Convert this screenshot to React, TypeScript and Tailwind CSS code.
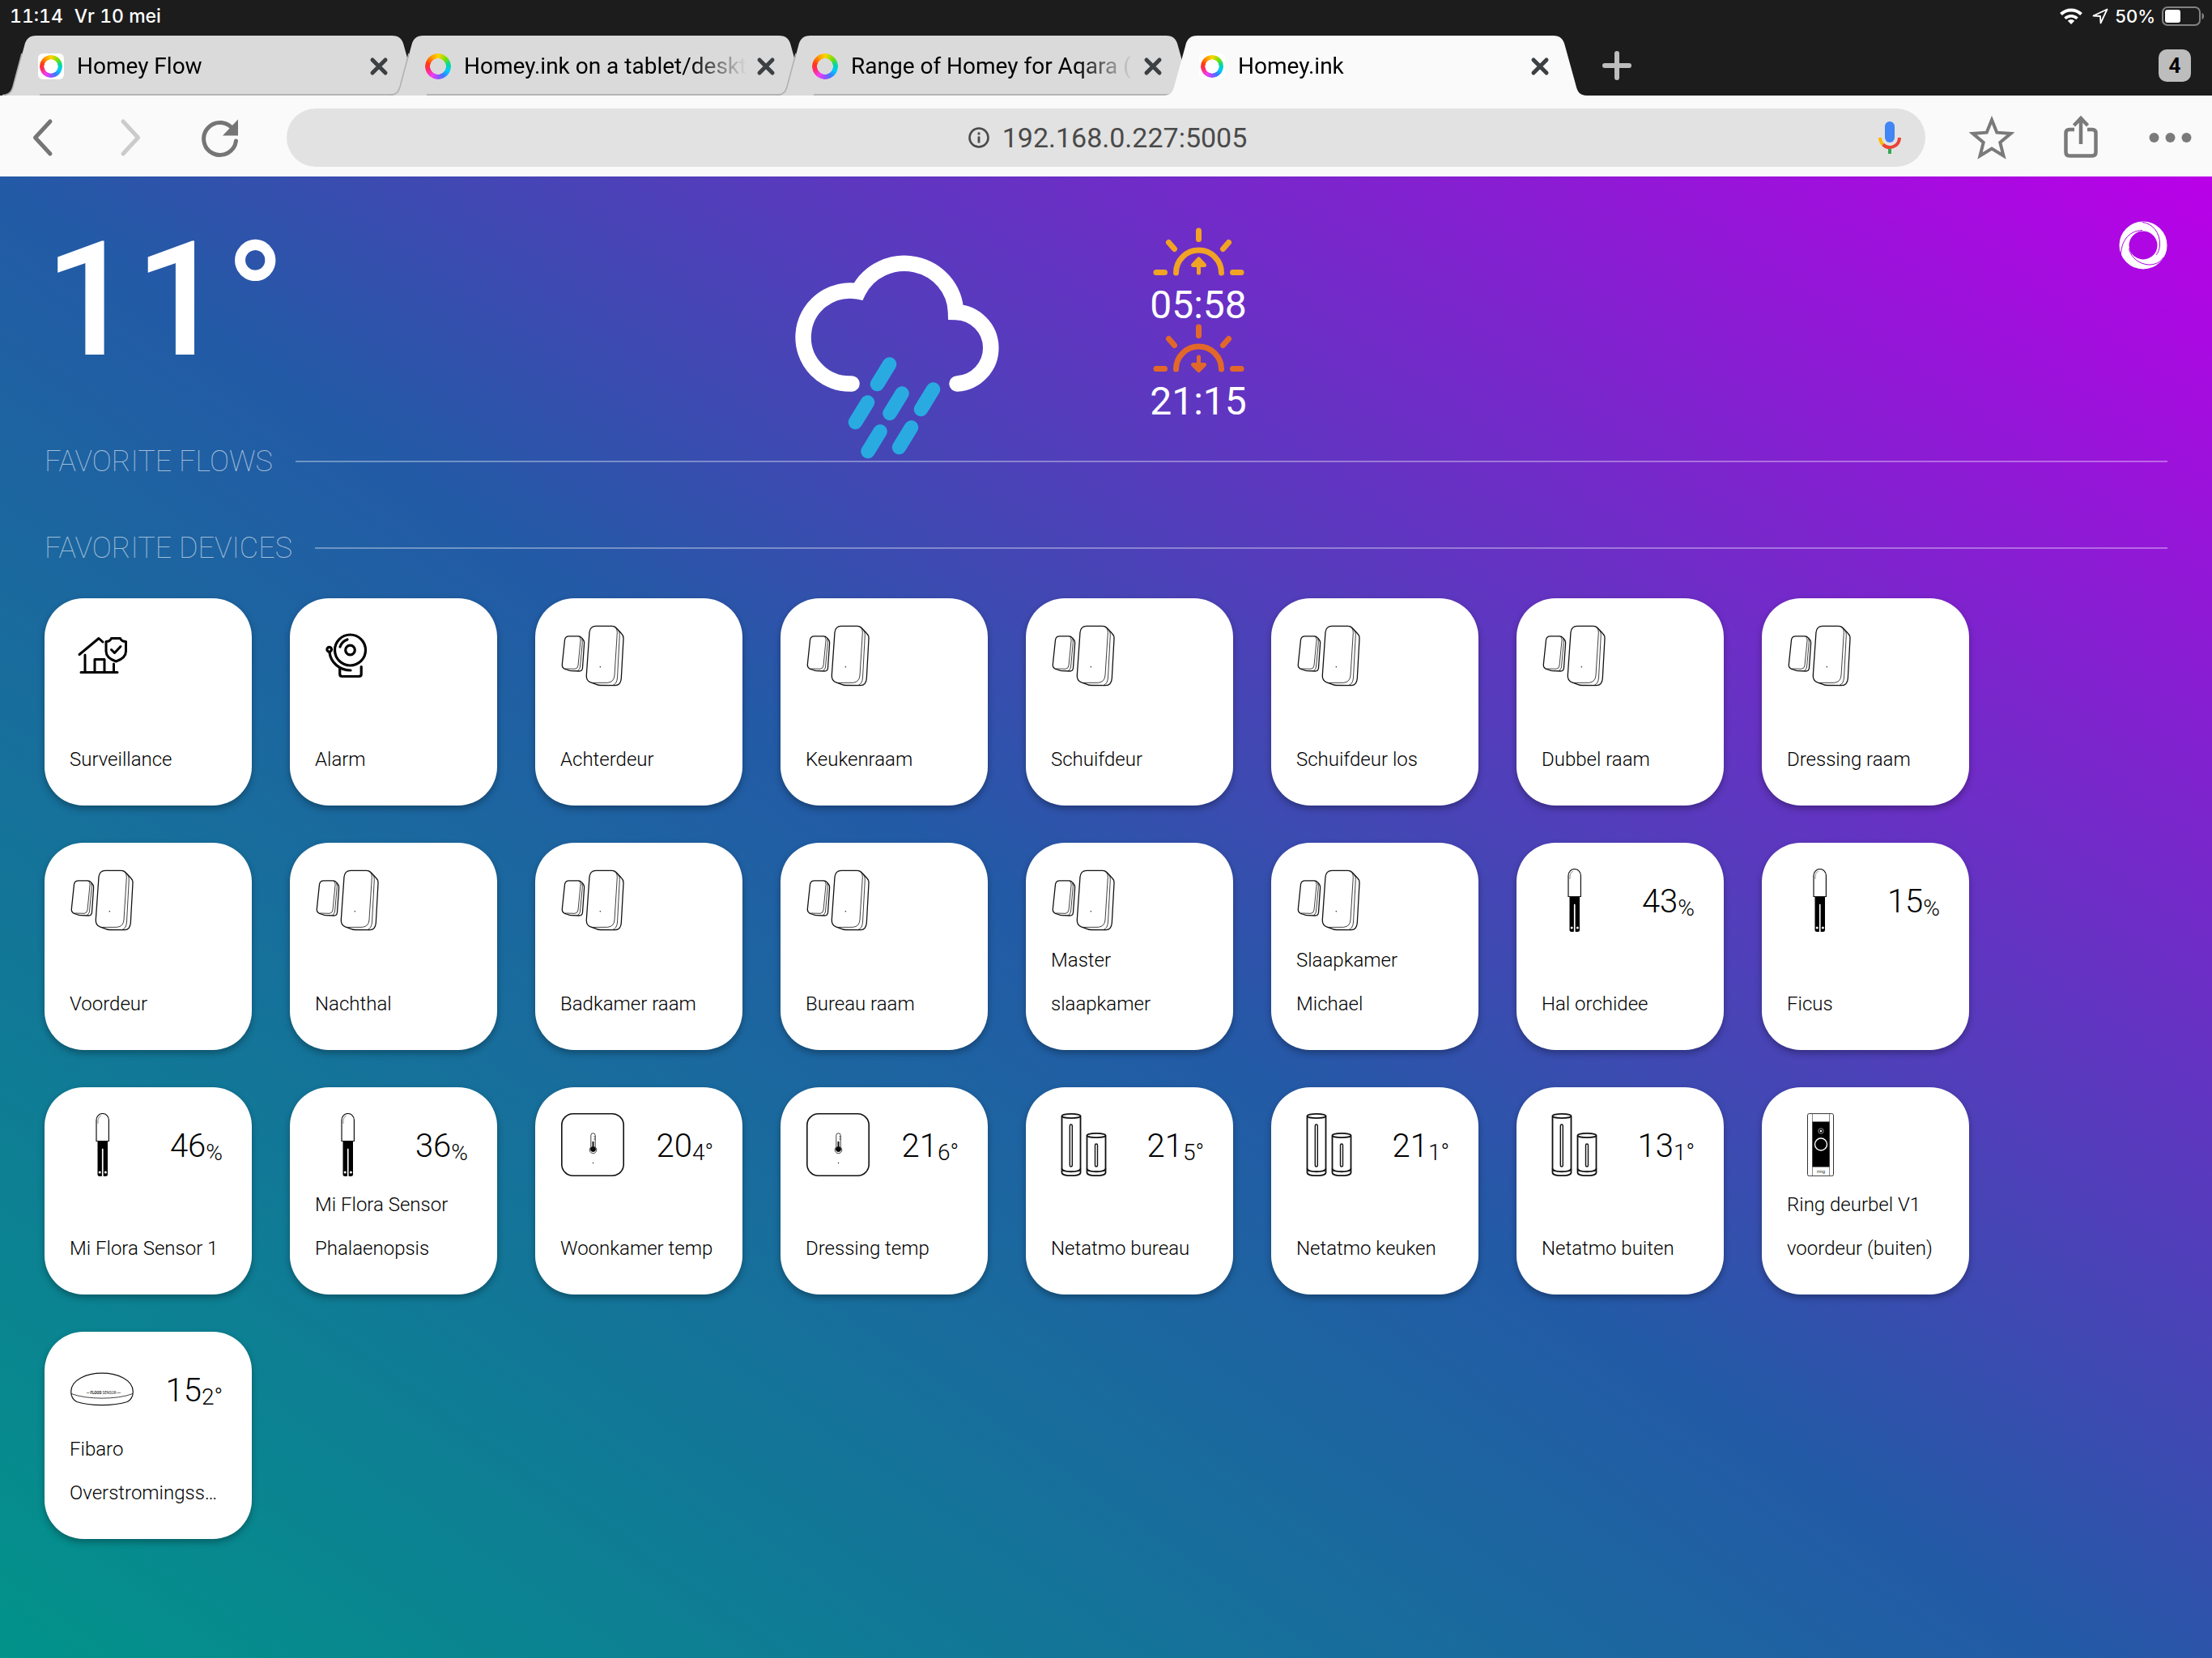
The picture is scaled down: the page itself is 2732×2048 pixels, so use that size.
import React from "react";

type IconName = "house" | "alarm" | "door" | "flora" | "thermo" | "netatmo" | "ring" | "flood";

type Device = { name: string; icon: IconName; value?: string; unit?: string };

const devices: Device[] = [
  { name: "Surveillance", icon: "house" },
  { name: "Alarm", icon: "alarm" },
  { name: "Achterdeur", icon: "door" },
  { name: "Keukenraam", icon: "door" },
  { name: "Schuifdeur", icon: "door" },
  { name: "Schuifdeur los", icon: "door" },
  { name: "Dubbel raam", icon: "door" },
  { name: "Dressing raam", icon: "door" },
  { name: "Voordeur", icon: "door" },
  { name: "Nachthal", icon: "door" },
  { name: "Badkamer raam", icon: "door" },
  { name: "Bureau raam", icon: "door" },
  { name: "Master slaapkamer", icon: "door" },
  { name: "Slaapkamer Michael", icon: "door" },
  { name: "Hal orchidee", icon: "flora", value: "43", unit: "%" },
  { name: "Ficus", icon: "flora", value: "15", unit: "%" },
  { name: "Mi Flora Sensor 1", icon: "flora", value: "46", unit: "%" },
  { name: "Mi Flora Sensor Phalaenopsis", icon: "flora", value: "36", unit: "%" },
  { name: "Woonkamer temp", icon: "thermo", value: "20", unit: "4°" },
  { name: "Dressing temp", icon: "thermo", value: "21", unit: "6°" },
  { name: "Netatmo bureau", icon: "netatmo", value: "21", unit: "5°" },
  { name: "Netatmo keuken", icon: "netatmo", value: "21", unit: "1°" },
  { name: "Netatmo buiten", icon: "netatmo", value: "13", unit: "1°" },
  { name: "Ring deurbel V1 voordeur (buiten)", icon: "ring" },
  { name: "Fibaro Overstromingss…", icon: "flood", value: "15", unit: "2°" },
];

const tabs = [
  { title: "Homey Flow", plate: true },
  { title: "Homey.ink on a tablet/deskt", plate: false },
  { title: "Range of Homey for Aqara (", plate: false },
  { title: "Homey.ink", plate: true, active: true },
];

function HouseIcon() {
  return (
    <g fill="none" stroke="#000" strokeWidth="3" strokeLinecap="round" strokeLinejoin="round">
      <path d="M11 37.5 35 17.5l5 4.5" />
      <path d="M18 38v21M13 59.5h45M53.500 49v10M30 59V43.500h12V59" />
      <path d="M50.500 17.500h11c1 2.500 3.500 4 7 4v12c0 6-5 10-12.200 12.500C49 43.500 44 39.500 44 33.500v-12c3.500 0 5.500-1.500 6.500-4z" />
      <path d="m50.500 31.500 4 4 7.500-8" />
    </g>
  );
}

function AlarmIcon() {
  return (
    <g fill="none" stroke="#000" strokeWidth="3.200" strokeLinecap="round" strokeLinejoin="round">
      <circle cx="42.500" cy="32" r="19" />
      <circle cx="42.500" cy="32" r="5.800" />
      <circle cx="16.700" cy="31.200" r="2.800" />
      <path d="M17 35c1.500 12 12 22 26 22" />
      <path d="M29.700 55V61.500q0 3 3 3h20.500q3 0 3-3v-9" />
      <path d="M30 28c1.500-4.500 4.500-7.500 9-9" />
    </g>
  );
}

function DoorIcon() {
  return (
    <g fill="none" stroke="#111" strokeWidth="1.300" strokeLinejoin="round">
      <path d="M10 14.800h11q3 0 4.500 2.200l2 2.500q1.300 1.600 1.100 4L26.500 54q-.4 4-4 4l-10-.3q-2 0-4.500-1.200l-3.500-1.200Q1 53.500 1.300 50L4.500 19.500q.6-4.700 5.500-4.700z" />
      <path strokeWidth=".8" d="M21.500 15q2.800 1 2.600 4.500L21 51q-.5 4-4 4.300L5 55M25.500 18.500q1 1.500.8 4L23.500 53q-.4 3-3 4.300" />
      <path d="M43 2.300h19.500q4 0 6 2.700l6 6.500q2.800 2.500 2.500 6.500L74.300 67q-.7 8.500-7.500 8.700L49 75.500q-3 0-5.500-1.200l-7-2.500q-5.500-2-5.200-8.500L35 10q.8-7.500 8-7.700z" />
      <path strokeWidth=".8" d="M64.500 2.600q5 2 4.800 8L66 63q-.5 8.500-8.500 9.300L38 72.400M70.500 7.500q2 2 1.800 6L69.500 66q-.5 7.500-5.500 9.500" />
      <circle cx="48.300" cy="52.700" r=".7" fill="#111" stroke="none" />
    </g>
  );
}

function FloraIcon() {
  return (
    <g>
      <path d="M32 34.500V8.500a7.700 8 0 0 1 15.400 0v26z" fill="#fff" stroke="#111" strokeWidth="1.200" />
      <path d="M34 13V9a6 6.500 0 0 1 4-6" fill="none" stroke="#777" strokeWidth=".8" />
      <path d="M33.500 35h12.500v41q0 2-2.500 2h-2.500q-.8 0-.8-1V45q0-1.500-.6-1.500t-.6 1.500v32q0 1-.8 1H36q-2.500 0-2.500-2z" fill="#000" />
      <path d="M39.700 44v34" stroke="#fff" strokeWidth="1.600" />
      <circle cx="36.200" cy="73" r="1.500" fill="#fff" />
      <circle cx="43.400" cy="73" r="1.500" fill="#fff" />
    </g>
  );
}

function ThermoIcon() {
  return (
    <g fill="none" stroke="#111">
      <rect x=".8" y=".8" width="76.400" height="76.400" rx="14" strokeWidth="1.600" />
      <path d="M36.800 42V27.500a2.700 2.700 0 0 1 5.400 0V42a4.300 4.300 0 1 1-5.400 0z" strokeWidth=".8" />
      <circle cx="39.500" cy="44.500" r="3" fill="#000" />
      <path d="M39.500 45V35" strokeWidth="2" />
      <path d="M40.500 29h2M40.500 32h2" strokeWidth=".8" />
      <circle cx="39.500" cy="61.500" r=".7" fill="#111" stroke="none" />
    </g>
  );
}

function NetatmoIcon() {
  return (
    <g fill="none" stroke="#111" strokeWidth="1.800">
      <path d="M12.500 3.500v70c0 5 23 5 23 0v-70" />
      <ellipse cx="24" cy="3.500" rx="11.500" ry="2.600" />
      <path d="M12.500 68.500c0 5 23 5 23 0" />
      <rect x="22.300" y="14" width="3" height="52" rx="1.500" strokeWidth="1.400" />
      <path d="M43.500 27.500v46c0 5 23 5 23 0v-46" />
      <ellipse cx="55" cy="27.500" rx="11.500" ry="2.600" />
      <path d="M43.500 68.500c0 5 23 5 23 0" />
      <rect x="53.500" y="38" width="3" height="28" rx="1.500" strokeWidth="1.400" />
    </g>
  );
}

function RingIcon() {
  return (
    <g>
      <rect x="24.500" y=".6" width="32" height="77" rx="2" fill="#fff" stroke="#333" strokeWidth="1" />
      <path d="M30.500.600v77M51.500.600v77" stroke="#555" strokeWidth=".7" />
      <rect x="30.500" y="10.500" width="21" height="56" fill="#000" />
      <circle cx="41" cy="22" r="3.200" fill="none" stroke="#bbb" strokeWidth=".8" />
      <circle cx="41" cy="22" r="1.300" fill="#fff" />
      <circle cx="41" cy="38.500" r="7.500" fill="none" stroke="#fff" strokeWidth="1.400" />
      <text x="41" y="73.500" textAnchor="middle" fontSize="6" fontFamily="Roboto, sans-serif" fill="#333">ring</text>
    </g>
  );
}

function FloodIcon() {
  return (
    <g fill="none" stroke="#111" strokeWidth="1.200">
      <path d="M.7 42C1 27 20 19.200 39 19.200S77 27 77.300 42c0 5-2.500 10-7 12.500-17 5.500-46 5.500-62.500 0C3 52 .7 47 .7 42z" />
      <path d="M1 44.500c19 7.500 57 7.500 76 0" strokeWidth=".8" />
      <path d="M20 43.500h3.500M57.500 43.500H62" strokeWidth=".5" />
      <text x="24.500" y="45.200" fontSize="4.500" fontFamily="Roboto, sans-serif" fill="#222" stroke="none">
        <tspan fontWeight="700">FLOOD</tspan> SENSOR
      </text>
    </g>
  );
}

const icons: Record<IconName, () => React.ReactElement> = {
  house: HouseIcon,
  alarm: AlarmIcon,
  door: DoorIcon,
  flora: FloraIcon,
  thermo: ThermoIcon,
  netatmo: NetatmoIcon,
  ring: RingIcon,
  flood: FloodIcon,
};

function Favicon({ plate }: { plate: boolean }) {
  return (
    <span className={plate ? "flex size-8 shrink-0 items-center justify-center rounded-md bg-white" : "flex size-8 shrink-0 items-center justify-center"}>
      <span
        className={
          (plate ? "size-7" : "size-8") +
          " rounded-full bg-[conic-gradient(#ffd500,#7be000_45deg,#00d8a0_80deg,#00c8ff_115deg,#3a7bff_150deg,#9a50ff_180deg,#f53cf0_215deg,#ff2a60_255deg,#ff3a10_285deg,#ff9a00_325deg,#ffd500)] mask-[radial-gradient(closest-side,transparent_60%,black_63%)]"
        }
      />
    </span>
  );
}

function TabShape({ active }: { active?: boolean }) {
  const fill = active ? "fill-[#fafafa]" : "fill-[#dadada]";
  return (
    <span aria-hidden="true" className="absolute inset-0 -z-10 flex">
      <svg viewBox="0 0 46 74" className="h-full w-[46px] shrink-0">
        <path className={fill} d="M0 74c9 0 12-5 14-14L27 13C29 4 33 0 42 0h5v74z" />
        <path d="M0 73.500c9 0 12-5 14-14L24 22" fill="none" stroke="#b0b0b0" strokeWidth={active ? 0 : 1.5} />
      </svg>
      <span className={active ? "flex-1 bg-[#fafafa]" : "flex-1 border-b-2 border-[#b4b4b4] bg-[#dadada]"} />
      <svg viewBox="0 0 46 74" className="h-full w-[46px] shrink-0">
        <path className={fill} d="M46 74c-9 0-12-5-14-14L19 13C17 4 13 0 4 0h-5v74z" />
        <path d="M-1 73h38" stroke="#b4b4b4" strokeWidth={active ? 0 : 2} />
      </svg>
    </span>
  );
}

function Tab({ title, plate, active }: { title: string; plate: boolean; active?: boolean }) {
  return (
    <div className={(active ? "z-10 " : "z-0 ") + "relative isolate -mr-[45px] flex h-[74px] w-[523px] items-center pt-0.5 pr-[46px] pl-11"}>
      <TabShape active={active} />
      <Favicon plate={plate} />
      <a
        href="#"
        aria-current={active ? "page" : undefined}
        className="ml-4 flex-1 mask-[linear-gradient(to_right,black_calc(100%-70px),transparent)] text-[28px] whitespace-nowrap text-black"
      >
        {title}
      </a>
      <button aria-label={"Close " + title} className="ml-3 size-6 shrink-0">
        <svg viewBox="0 0 24 24" className="size-6">
          <path d="M4 4l16 16M20 4 4 20" stroke="#3c4043" strokeWidth="5" strokeLinecap="round" />
        </svg>
      </button>
    </div>
  );
}

function StatusBar() {
  return (
    <div className="flex h-11 items-center justify-between pt-0 pr-2 pb-1 pl-3 font-['Inter',sans-serif] text-[22px] font-medium text-white">
      <div className="flex gap-3.5 text-[23px] tabular-nums">
        <span>11:14</span>
        <span>Vr 10 mei</span>
      </div>
      <div className="flex items-center gap-2">
        <svg viewBox="0 0 28 20" className="mr-1 h-5 w-7" fill="none" stroke="#fff" strokeWidth="4">
          <path d="M1.500 7.500a18 18 0 0 1 25 0" />
          <path d="M6.500 12.800a10.800 10.800 0 0 1 15 0" strokeWidth="3.600" />
          <path d="M14 20l-4.200-4.300a6 6 0 0 1 8.400 0z" fill="#fff" stroke="none" />
        </svg>
        <svg viewBox="0 0 20 20" className="size-5" fill="none" stroke="#fff" strokeWidth="1.800" strokeLinejoin="round">
          <path d="M18.500 1.500 1.500 9.500l8.500.500.500 8.500z" />
        </svg>
        <span>50%</span>
        <svg viewBox="0 0 54 24" className="h-6 w-[54px]">
          <rect x="1" y="1" width="46" height="22" rx="6" fill="none" stroke="#828282" strokeWidth="2" />
          <rect x="4" y="4" width="19" height="16" rx="3" fill="#fff" />
          <path d="M49.500 8c3.500 1 3.500 7 0 8z" fill="#828282" />
        </svg>
      </div>
    </div>
  );
}

function Toolbar() {
  return (
    <div className="flex h-[100px] items-center bg-[#fafafa] pt-1 pr-6 pb-0 pl-8">
      <button aria-label="Back" className="mr-12 size-12">
        <svg viewBox="0 0 48 48" className="size-12" fill="none" stroke="#757575" strokeWidth="5" strokeLinecap="round" strokeLinejoin="round">
          <path d="M30 4 11.500 24 30 44" />
        </svg>
      </button>
      <button aria-label="Forward" className="mr-[71px] size-12">
        <svg viewBox="0 0 48 48" className="size-12" fill="none" stroke="#cbcbcb" strokeWidth="5" strokeLinecap="round" strokeLinejoin="round">
          <path d="M24 4l18.500 20L24 44" />
        </svg>
      </button>
      <button aria-label="Reload" className="mr-[57px] size-[50px]">
        <svg viewBox="0 0 50 50" className="size-[50px]">
          <path d="M42 16.500A20 20 0 1 0 44.500 29" fill="none" stroke="#757575" strokeWidth="5" strokeLinecap="round" />
          <path d="M47 2.500v20H28z" fill="#757575" />
        </svg>
      </button>
      <div className="flex h-[72px] flex-1 items-center justify-between rounded-full bg-[#e2e2e2] pr-7 pl-8">
        <span className="w-8" />
        <label className="flex items-center gap-4">
          <svg viewBox="0 0 26 26" className="size-[26px]" aria-label="Site information">
            <circle cx="13" cy="13" r="11.500" fill="none" stroke="#4a4a4a" strokeWidth="2.600" />
            <path d="M13 11.500v8M13 6.500v3" stroke="#4a4a4a" strokeWidth="2.800" />
          </svg>
          <input
            aria-label="Address"
            defaultValue="192.168.0.227:5005"
            className="field-sizing-content bg-transparent text-[34px] text-[#4a4a4a] outline-none"
          />
        </label>
        <button aria-label="Voice search" className="h-10 w-8">
          <svg viewBox="0 0 32 40" className="h-10 w-8" fill="none">
            <rect x="10" y="0" width="12" height="26" rx="6" fill="#4285f4" />
            <path d="M4 20a12 12 0 0 0 3.600 8.500" stroke="#fbbc05" strokeWidth="4" />
            <path d="M7.600 28.500A12 12 0 0 0 28 20" stroke="#ea4335" strokeWidth="4" />
            <path d="M16 34v6.500" stroke="#34a853" strokeWidth="4" />
          </svg>
        </button>
      </div>
      <button aria-label="Bookmark" className="ml-[54px] h-14 w-14">
        <svg viewBox="0 0 56 56" className="size-14" fill="none" stroke="#7a7a7a" strokeWidth="4">
          <path d="m28 6 6.300 15.700 17.200 1.200-13.200 11 4.200 16.500L28 41.500l-14.500 8.900 4.200-16.500-13.200-11 17.200-1.200z" />
        </svg>
      </button>
      <button aria-label="Share" className="ml-[54px] h-14 w-14">
        <svg viewBox="0 0 56 56" className="size-14" fill="none" stroke="#7a7a7a" strokeWidth="4.500">
          <path d="M20 18h-6q-4.500 0-4.500 4.500V46q0 4.500 4.500 4.500h28q4.500 0 4.500-4.500V22.500Q46.500 18 42 18h-6" />
          <path d="M28 36V4.500M19.500 13 28 4l8.500 9" />
        </svg>
      </button>
      <button aria-label="More" className="ml-[54px] h-14 w-14">
        <svg viewBox="0 0 56 56" className="size-14" fill="#7a7a7a">
          <circle cx="8.500" cy="28" r="6" />
          <circle cx="28.500" cy="28" r="6" />
          <circle cx="48.500" cy="28" r="6" />
        </svg>
      </button>
    </div>
  );
}

function RainCloud() {
  return (
    <svg viewBox="0 0 251 250" className="-mb-[17px] h-[250px] w-[251px] overflow-visible" fill="none" strokeLinecap="round">
      <path
        stroke="#fff"
        strokeWidth="19.500"
        d="M68 157A57.500 57.500 0 1 1 76 43A63.500 62 0 0 1 196.500 68.500A44.500 44.300 0 0 1 198 157"
      />
      <path
        stroke="#29abe2"
        strokeWidth="17.500"
        d="M114.500 133l-15 24.500M87.500 180l-15 24.500M130 169l-15 24.500M168.500 164l-15 24.500M103 216l-15 24.500M141.500 211l-15 24.500"
      />
    </svg>
  );
}

function SunIcon({ down }: { down?: boolean }) {
  return (
    <svg
      viewBox="0 0 113 72"
      className={down ? "h-[72px] w-[113px] text-[#e2682a]" : "h-[72px] w-[113px] text-[#f0a324]"}
      fill="none"
      stroke="currentColor"
      strokeWidth="7"
      strokeLinecap="round"
    >
      <path d="M56.500 4v10.500M19.500 18.500l7 8M93.500 18.500l-7 8M4 55.500h10.500M98.500 55.500H109M28.500 56a28 28 0 0 1 56 0" />
      {down ? (
        <path d="M56.500 41v8M49.500 50.500h14l-7 7z" strokeWidth="5" strokeLinejoin="round" fill="currentColor" />
      ) : (
        <path d="M56.500 56v-8M49.500 46.500h14l-7-7.500z" strokeWidth="5" strokeLinejoin="round" fill="currentColor" />
      )}
    </svg>
  );
}

function HomeyLogo() {
  return (
    <svg viewBox="0 0 60 60" className="size-[60px]" fill="none">
      <circle cx="30" cy="30" r="23.500" stroke="#fff" strokeWidth="12" />
      <path
        stroke="#ad00e4"
        strokeWidth="1"
        d="M29 1.500C42 3 51 15 50.500 29c-.2 6-2 10-4.500 13M2.500 46C1.500 28 10 12 29 11.500M12.500 34C15 46 26 53.500 37 54c8 0 14-3 18-9"
      />
    </svg>
  );
}

function SectionTitle({ children }: { children: string }) {
  return (
    <div className="flex items-center gap-7">
      <h2 className="text-[36px] leading-10 font-thin text-white/60">{children}</h2>
      <span className="h-0.5 flex-1 bg-white/35" />
    </div>
  );
}

function DeviceCard({ device }: { device: Device }) {
  const Icon = icons[device.icon];
  return (
    <button className="flex size-64 flex-col justify-between rounded-[48px] bg-white px-[31px] pt-8 pb-[30px] text-left text-black shadow-[0_4px_8px_rgba(0,0,0,0.3)]">
      <span className="flex h-20 w-full shrink-0 items-start justify-between">
        <svg viewBox="0 0 78 78" className="ml-px size-[78px] shrink-0">
          <Icon />
        </svg>
        {device.value && (
          <span className="pr-[5px] text-[40px] leading-[82px] font-light">
            {device.value}
            <span className="align-[-4px] text-[28px] leading-none">{device.unit}</span>
          </span>
        )}
      </span>
      <span className="-mt-4 text-[24px] leading-[54px] font-light">{device.name}</span>
    </button>
  );
}

export default function App() {
  return (
    <div className="flex min-h-screen flex-col bg-[#1c1c1c] font-['Roboto',sans-serif]">
      <StatusBar />
      <nav aria-label="Tabs" className="flex items-center pl-[3px]">
        {tabs.map((tab) => (
          <Tab key={tab.title} {...tab} />
        ))}
        <button aria-label="New tab" className="ml-16 size-9">
          <svg viewBox="0 0 36 36" className="size-9" stroke="#bdbdbd" strokeWidth="6" strokeLinecap="round">
            <path d="M18 3v30M3 18h30" />
          </svg>
        </button>
        <button aria-label="Show open tabs" className="mr-[26px] ml-auto flex size-10 items-center justify-center rounded-[10px] bg-[#bdbdbd] text-[26px] font-bold text-black">
          4
        </button>
      </nav>
      <Toolbar />
      <main className="flex-1 bg-[linear-gradient(to_top_right,#009688_0%,#235aa6_50%,#ba00e8_100%)] bg-size-[100%_106%] bg-no-repeat px-[55px] pt-[55px] pb-12">
        <header className="grid grid-cols-[929fr_438fr_1195fr_60px] items-start">
          <p className="text-[196px] leading-[196px] font-medium text-white">11°</p>
          <div className="pt-11">
            <RainCloud />
          </div>
          <div className="flex w-[116px] flex-col items-center pt-2 text-[48px] leading-[47px] text-white">
            <SunIcon />
            <span>05:58</span>
            <SunIcon down />
            <span>21:15</span>
          </div>
          <button aria-label="Homey">
            <HomeyLogo />
          </button>
        </header>
        <section>
          <SectionTitle>FAVORITE FLOWS</SectionTitle>
        </section>
        <section className="mt-[67px]">
          <SectionTitle>FAVORITE DEVICES</SectionTitle>
          <div className="mt-[42px] flex flex-wrap gap-x-[47px] gap-y-[46px]">
            {devices.map((device) => (
              <DeviceCard key={device.name} device={device} />
            ))}
          </div>
        </section>
      </main>
    </div>
  );
}
